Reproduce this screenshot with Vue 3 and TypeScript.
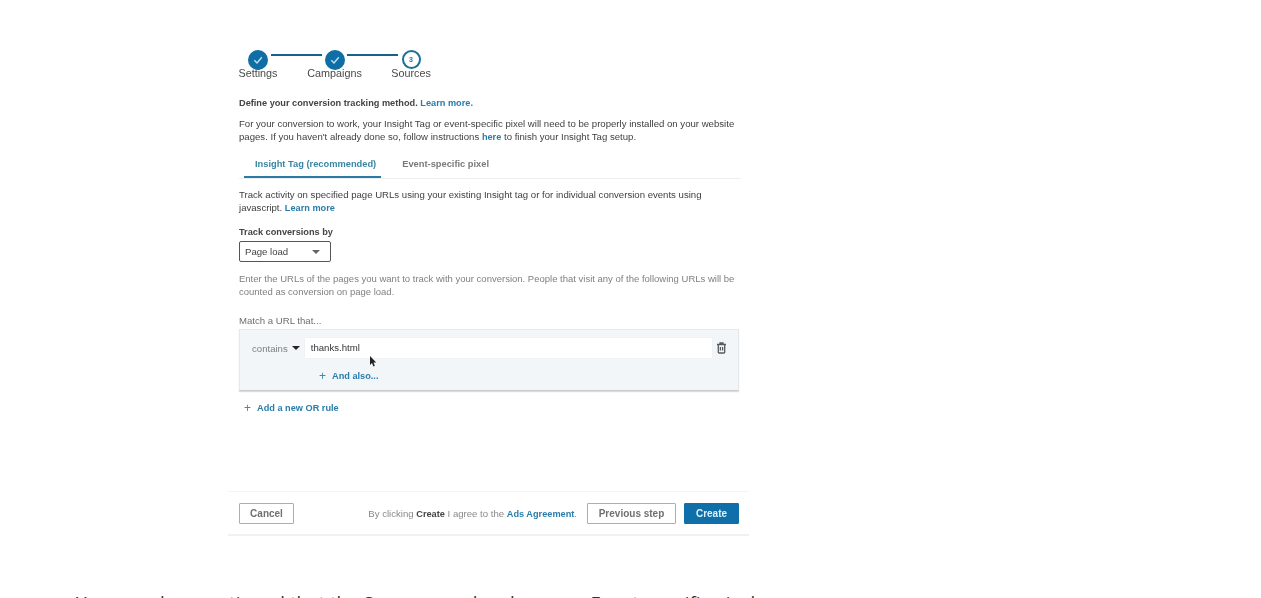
<script setup lang="ts">
const steps = [
  { label: 'Settings', done: true },
  { label: 'Campaigns', done: true },
  { label: 'Sources', done: false },
]
</script>

<template>
  <div class="page">
    <div class="panel">
      <div class="body">
        <div class="stepper">
          <template v-for="(s, i) in steps" :key="s.label">
            <div class="step">
              <span v-if="s.done" class="dot done">
                <svg width="12" height="12" viewBox="0 0 12 12"><path d="M2.300 6.300 5 9 9.800 3.300" fill="none" stroke="#bfe0f5" stroke-width="1.400" /></svg>
              </span>
              <span v-else class="dot todo">3</span>
              <span class="step-label">{{ s.label }}</span>
            </div>
            <span v-if="i < 2" class="line"></span>
          </template>
        </div>

        <p class="define"><b>Define your conversion tracking method.</b> <a class="link">Learn more.</a></p>
        <p class="intro">For your conversion to work, your Insight Tag or event-specific pixel will need to be properly installed on your website pages. If you haven't already done so, follow instructions <a class="link">here</a> to finish your Insight Tag setup.</p>

        <div class="tabs">
          <span class="tab active">Insight Tag (recommended)</span>
          <span class="tab">Event-specific pixel</span>
        </div>

        <p class="track">Track activity on specified page URLs using your existing Insight tag or for individual conversion events using javascript. <a class="link">Learn more</a></p>

        <div class="field-label">Track conversions by</div>
        <div class="select">
          <span>Page load</span>
          <i class="caret grey"></i>
        </div>

        <p class="hint">Enter the URLs of the pages you want to track with your conversion. People that visit any of the following URLs will be counted as conversion on page load.</p>

        <div class="match-label">Match a URL that...</div>
        <div class="rule">
          <div class="rule-row">
            <span class="contains">contains</span>
            <i class="caret dark"></i>
            <div class="url">
              thanks.html
              <svg class="cursor" width="8" height="12" viewBox="0 0 8 12"><path d="M1 0v9l2-2 1.400 3.400 1.400-.6L4.500 6.500H7.200Z" fill="#222" /></svg>
            </div>
            <svg class="trash" width="11" height="12" viewBox="0 0 11 12"><path d="M1 2.500h9M4 2.300V1h3v1.300M2.300 2.700v7.500q0 .8.800.8h4.800q.8 0 .8-.8V2.700M4.400 5v3.600M6.600 5v3.600" fill="none" stroke="#565b5e" stroke-width="1.300" /></svg>
          </div>
          <div class="also"><span class="plus">+</span><a class="link">And also...</a></div>
        </div>
        <div class="or"><span class="plus">+</span><a class="link">Add a new OR rule</a></div>
      </div>

      <div class="footer">
        <button class="btn">Cancel</button>
        <div class="right">
          <span class="agree">By clicking <b>Create</b> I agree to the <a class="link">Ads Agreement</a>.</span>
          <button class="btn prev">Previous step</button>
          <button class="btn primary">Create</button>
        </div>
      </div>
    </div>
    <p class="caption">You can also mentioned that the Sources can be also as an Event-specific pixels</p>
  </div>
</template>

<style>
html, body { margin: 0; background: #fff; overflow: hidden; }
</style>

<style scoped>
.page {
  height: 598px;
  overflow: hidden;
  font-family: "Liberation Sans", Arial, sans-serif;
  color: #3f3f3f;
  position: relative;
}
.panel {
  width: 521px;
  margin-left: 228px;
  padding-top: 50px;
  filter: blur(0.4px);
  font-size: 9.600px;
}
.body { padding: 0 10px 0 11px; height: 441px; }
.link { color: #2a7dab; font-weight: 700; font-size: 9.200px; }
p { margin: 0; }
b { font-size: 9.200px; color: #444; }
.stepper { display: flex; align-items: flex-start; height: 29px; margin-left: -1px; }
.step { width: 40px; display: flex; flex-direction: column; align-items: center; flex: none; position: relative; }
.dot {
  width: 20px; height: 20px; border-radius: 50%; box-sizing: border-box;
  display: flex; align-items: center; justify-content: center; flex: none;
}
.done { background: #0f6ea6; }
.todo { border: 2px solid #1a7096; font-size: 7px; font-weight: 700; color: #3a6d8c; width: 19px; height: 19px; margin-bottom: 1px; }
.step-label { font-size: 10.800px; line-height: 12px; margin-top: -3px; color: #4a4a4a; white-space: nowrap; }
.line { width: 51px; height: 2px; background: #16628f; margin: 4px -7.250px 0; flex: none; }
.define { line-height: 13px; margin-top: 17px; }
.intro { line-height: 13px; margin-top: 7px; }
.tabs { display: flex; height: 26px; margin-top: 8px; border-bottom: 1px solid #eceff1; margin-right: -2px; }
.tab { font-size: 9.300px; font-weight: 700; color: #7a7a7a; padding: 7px 5px 0; box-sizing: border-box; height: 26px; margin-left: 11px; margin-right: 5px; }
.tab:first-child { margin-left: 5px; padding-left: 11px; }
.active { color: #3a85a3; border-bottom: 2px solid #2b7aa5; }
.track { line-height: 13px; margin-top: 9px; }
.field-label { font-size: 9.200px; font-weight: 700; line-height: 13px; margin-top: 11px; color: #444; }
.select {
  width: 92px; height: 21px; box-sizing: border-box; margin-top: 2px;
  border: 1px solid #555; border-radius: 2px;
  display: flex; align-items: center; justify-content: space-between; padding: 0 10px 0 5px;
}
.caret { display: block; width: 0; height: 0; border-left: 4px solid transparent; border-right: 4px solid transparent; }
.caret.grey { border-top: 4px solid #666; }
.caret.dark { border-top: 4px solid #222; margin-left: 4px; flex: none; }
.hint { font-size: 9.500px; line-height: 13px; margin-top: 10px; color: #808080; }
.match-label { line-height: 13px; margin-top: 16px; color: #6e6e6e; }
.rule {
  margin-top: 2px; height: 62px; width: 500px; box-sizing: border-box;
  background: #f2f6f9; border: 1px solid #e6e9eb; border-bottom: 1px solid #c9cccd;
  box-shadow: 0 1px 1px #ddd;
}
.rule-row { display: flex; align-items: center; height: 20px; margin-top: 8px; padding-left: 12px; }
.contains { color: #808080; }
.url {
  width: 407px; height: 20px; background: #fff; margin-left: 5px; flex: none; position: relative;
  line-height: 20px; padding-left: 6px; box-sizing: border-box; color: #333;
  box-shadow: 0 0 1px #e3e6e8;
}
.cursor { position: absolute; left: 64px; top: 18px; }
.trash { margin-left: 4px; }
.also { margin-top: 12px; margin-left: 79px; display: flex; align-items: center; }
.plus { color: #3f8aa8; font-size: 12px; line-height: 12px; width: 13px; flex: none; }
.or { margin-top: 11px; margin-left: 5px; display: flex; align-items: center; }
.footer {
  height: 45px; box-sizing: border-box; border-top: 1px solid #f4f4f4; border-bottom: 2px solid #f1f1f1;
  display: flex; align-items: center; justify-content: space-between; padding: 0 10px 0 11px;
}
.right { display: flex; align-items: center; }
.btn {
  height: 21px; box-sizing: border-box; background: #fff; border: 1px solid #adadad; border-radius: 1px;
  font: 700 10px "Liberation Sans", Arial, sans-serif; color: #707070; padding: 0; width: 55px;
}
.agree { color: #8a8a8a; margin-right: 10px; white-space: nowrap; }
.prev { width: 89px; margin-right: 8px; }
.primary { background: #0f6fa8; border-color: #0f6fa8; color: #e0f3fb; }
.caption { position: absolute; left: 76px; top: 591px; font-size: 18.700px; line-height: 24px; color: #333; white-space: nowrap; margin: 0; font-family: "Open Sans", sans-serif; }
</style>
